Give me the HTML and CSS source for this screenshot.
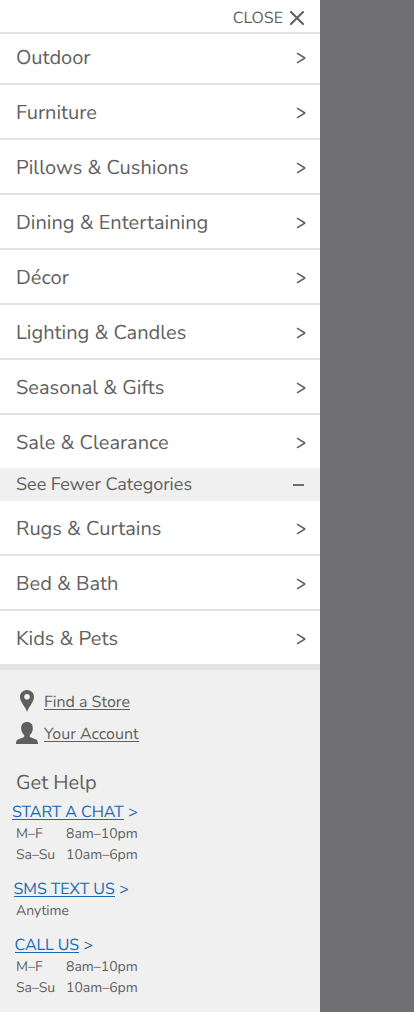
FILE: index.html
```html
<!DOCTYPE html>
<html lang="en">
<head>
<meta charset="utf-8">
<meta name="viewport" content="width=device-width, initial-scale=1">
<title>Shop menu</title>
<link rel="stylesheet" href="styles.css">
</head>
<body>
<svg class="sprite" aria-hidden="true"><symbol id="arrow" viewBox="0 0 10 12"><path d="M1 1.200 9 6 1 10.800" fill="none" stroke="currentColor" stroke-width="1.500" stroke-linejoin="bevel"/></symbol></svg>
<aside class="drawer">
  <header class="drawer-head"><span class="close-label">CLOSE</span><svg class="close-icon" viewBox="0 0 14 14"><path d="M1 1 13 13M13 1 1 13" fill="none" stroke="currentColor" stroke-width="2" stroke-linecap="round"/></svg></header>
  <nav>
    <a class="row row-first"><span>Outdoor</span><svg class="arrow"><use href="#arrow"/></svg></a>
    <a class="row"><span>Furniture</span><svg class="arrow"><use href="#arrow"/></svg></a>
    <a class="row"><span>Pillows &amp; Cushions</span><svg class="arrow"><use href="#arrow"/></svg></a>
    <a class="row"><span>Dining &amp; Entertaining</span><svg class="arrow"><use href="#arrow"/></svg></a>
    <a class="row"><span>Décor</span><svg class="arrow"><use href="#arrow"/></svg></a>
    <a class="row"><span>Lighting &amp; Candles</span><svg class="arrow"><use href="#arrow"/></svg></a>
    <a class="row"><span>Seasonal &amp; Gifts</span><svg class="arrow"><use href="#arrow"/></svg></a>
    <a class="row row-last"><span>Sale &amp; Clearance</span><svg class="arrow"><use href="#arrow"/></svg></a>
    <a class="toggle"><span>See Fewer Categories</span><i class="minus"></i></a>
    <a class="row"><span>Rugs &amp; Curtains</span><svg class="arrow"><use href="#arrow"/></svg></a>
    <a class="row"><span>Bed &amp; Bath</span><svg class="arrow"><use href="#arrow"/></svg></a>
    <a class="row row-last"><span>Kids &amp; Pets</span><svg class="arrow"><use href="#arrow"/></svg></a>
  </nav>
  <section class="help">
    <a class="quick"><svg class="quick-icon" viewBox="0 0 22 22"><path fill="currentColor" fill-rule="evenodd" d="M11 0C7 0 4 3 4 7c0 5 5 9 7 15 2-6 7-10 7-15 0-4-3-7-7-7Zm0 4a2.800 2.800 0 1 1 0 5.600 2.800 2.800 0 0 1 0-5.600Z"/></svg><span>Find a Store</span></a>
    <a class="quick"><svg class="quick-icon" viewBox="0 0 22 22"><path fill="currentColor" d="M11 0C7 0 5.200 2.500 5.200 6c0 3 1 5.500 3 7v2L2.500 17.200C.8 17.900 0 19 0 22h22c0-3-.8-4.100-2.500-4.800L13.800 15v-2c2-1.500 3-4 3-7C16.800 2.500 15 0 11 0Z"/></svg><span>Your Account</span></a>
    <h2>Get Help</h2>
    <div class="contact">
      <a class="link"><span>START A CHAT</span> <b>&gt;</b></a>
      <div class="hours"><span class="days">M–F</span><span>8am–10pm</span></div>
      <div class="hours"><span class="days">Sa–Su</span><span>10am–6pm</span></div>
    </div>
    <div class="contact">
      <a class="link link-sms"><span>SMS TEXT US</span> <b>&gt;</b></a>
      <div class="hours"><span>Anytime</span></div>
    </div>
    <div class="contact">
      <a class="link link-call"><span>CALL US</span> <b>&gt;</b></a>
      <div class="hours"><span class="days">M–F</span><span>8am–10pm</span></div>
      <div class="hours"><span class="days">Sa–Su</span><span>10am–6pm</span></div>
    </div>
  </section>
</aside>
</body>
</html>
```
FILE: styles.css
```css
* { box-sizing: border-box; }
body { margin: 0; height: 1012px; overflow: hidden; background: #707072; color: #5f5f5f; font-family: "Nunito Sans", Nunito, Lato, sans-serif; font-weight: 385; text-rendering: geometricPrecision; }
.sprite { display: none; }
.drawer { width: 320px; height: 1012px; background: #fff; overflow: hidden; }
.drawer-head { height: 34px; border-bottom: 2px solid #e3e3e3; display: flex; align-items: center; justify-content: flex-end; gap: 7px; padding: 3px 16px 0 0; font-size: 16px; }
.close-icon { width: 14px; height: 14px; }
.row { height: 55px; border-bottom: 2px solid #e3e3e3; display: flex; align-items: center; justify-content: space-between; padding: 4px 14px 0 16px; font-size: 20px; line-height: 26px; }
.row-first { height: 51px; padding-top: 0; }
.row-last { height: 53px; border-bottom: 0; }
.arrow { width: 10px; height: 12px; margin-bottom: 2px; }
.toggle { height: 33px; background: #f0f0f0; display: flex; align-items: center; justify-content: space-between; padding: 0 16px; font-size: 18px; line-height: 23px; }
.toggle span { margin-top: 2px; }
.minus { width: 11px; height: 2px; background: #6c6c6c; }
.help { height: 348px; background: #f0f0f0; border-top: 6px solid #e2e2e2; padding: 20px 12px 0; }
.quick { height: 22px; margin: 0 0 10px 4px; display: flex; gap: 6px; align-items: flex-start; font-size: 16px; line-height: 19px; }
.quick-icon { width: 22px; height: 22px; }
.quick span { height: 17px; margin-top: 3px; border-bottom: 1px solid; }
h2 { margin: 27px 0 -1px 4px; font-size: 20px; line-height: 26px; font-weight: inherit; }
.contact { margin-bottom: 8px; }
.link { display: flex; gap: 4.500px; height: 27px; padding-top: 8px; font-size: 16px; line-height: 17px; letter-spacing: -.08px; color: #1d68b3; }
.link span { height: 16px; border-bottom: 1px solid; }
.link b { font-weight: inherit; }
.link-sms { padding-left: 1.600px; }
.link-call { padding-left: 2.500px; }
.hours { height: 21px; padding-left: 4px; display: flex; font-size: 14px; line-height: 21px; }
.days { width: 50px; }
```
